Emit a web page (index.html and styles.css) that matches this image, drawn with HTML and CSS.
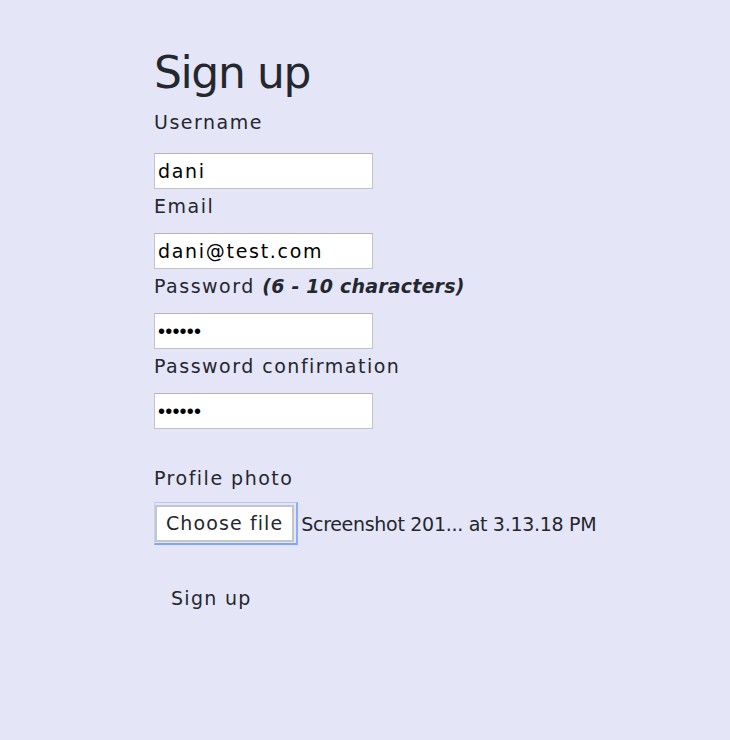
FILE: index.html
```html
<!DOCTYPE html>
<html lang="en">
<head>
<meta charset="utf-8">
<title>Sign up</title>
<link rel="stylesheet" href="styles.css">
</head>
<body>
<main class="page">
  <h1 class="title">Sign up</h1>
  <form class="form">
    <label class="label label-first" for="username">Username</label>
    <input class="field" id="username" type="text" value="dani">
    <label class="label" for="email">Email</label>
    <input class="field" id="email" type="text" value="dani@test.com">
    <label class="label" for="password">Password <em class="hint">(6 - 10 characters)</em></label>
    <input class="field field-secret" id="password" type="password" value="secret">
    <label class="label" for="confirm">Password confirmation</label>
    <input class="field field-secret" id="confirm" type="password" value="secret">
    <label class="label label-photo">Profile photo</label>
    <div class="file">
      <span class="file-ring"><span class="file-btn">Choose file</span></span>
      <span class="file-name">Screenshot 201... at 3.13.18 PM</span>
    </div>
    <button class="submit" type="button">Sign up</button>
  </form>
</main>
</body>
</html>
```
FILE: styles.css
```css
html, body {
  margin: 0;
  padding: 0;
}
body {
  background: #e4e5f7;
  color: #25272e;
  font-family: "DejaVu Sans", "Inter", sans-serif;
  min-height: 740px;
}
.page {
  padding: 43px 0 0 154px;
}
.title {
  margin: 0 0 4px;
  font-size: 44px;
  font-weight: 400;
  line-height: 60px;
  letter-spacing: -1.4px;
}
.form {
  display: flex;
  flex-direction: column;
  align-items: flex-start;
}
.label {
  display: block;
  font-size: 19px;
  line-height: 30px;
  height: 30px;
  margin: 0 0 12px;
  letter-spacing: 1.5px;
  white-space: nowrap;
}
.label-first {
  margin-bottom: 16px;
}
.hint {
  font-weight: 700;
  font-style: italic;
  letter-spacing: 0.2px;
}
.field {
  box-sizing: border-box;
  width: 219px;
  height: 36px;
  margin: 0 0 2px;
  padding: 0 3px;
  border: 1px solid #c3c3c3;
  border-top-color: #b5b5b5;
  background: #fff;
  color: #000;
  font-family: inherit;
  font-size: 19px;
  letter-spacing: 1.7px;
  outline: none;
}
.field-secret {
  font-family: "Liberation Sans", sans-serif;
  font-size: 20px;
  letter-spacing: 0.2px;
}
.label-photo {
  margin-top: 32px;
  margin-bottom: 9px;
}
.file {
  display: flex;
  align-items: center;
}
.file-ring {
  display: inline-flex;
  padding: 2px 2px 1px 0;
  border-top: 1px solid #b3c8f7;
  border-right: 2px solid #8caef6;
  border-bottom: 2px solid #7fa5f6;
  border-left: 1px solid #c3d2f5;
}
.file-btn {
  display: inline-block;
  box-sizing: border-box;
  height: 37px;
  background: #fff;
  border: 2px solid #c6c6c6;
  padding: 0 9px;
  font-size: 19px;
  line-height: 33px;
  letter-spacing: 1.1px;
  color: #25272e;
}
.file-name {
  margin-left: 3px;
  font-size: 19px;
  letter-spacing: -0.3px;
  white-space: nowrap;
}
.submit {
  margin-top: 34px;
  padding: 4px 17px;
  border: none;
  background: transparent;
  color: #25272e;
  font-family: inherit;
  font-size: 19px;
  line-height: 30px;
  letter-spacing: 1.3px;
}
```
